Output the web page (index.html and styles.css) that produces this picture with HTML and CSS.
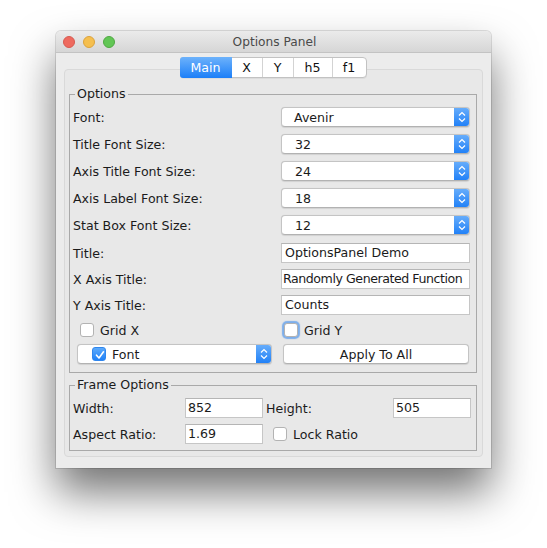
FILE: index.html
```html
<!DOCTYPE html>
<html>
<head>
<meta charset="utf-8">
<link rel="stylesheet" href="styles.css">
</head>
<body>
<div class="window">
  <div class="titlebar">
    <div class="lights">
      <span class="light red"></span>
      <span class="light yellow"></span>
      <span class="light green"></span>
    </div>
    <div class="wtitle">Options Panel</div>
    <div class="lights-spacer"></div>
  </div>
  <div class="body">
    <div class="tabs">
      <div class="seg sel w-main">Main</div>
      <div class="seg w-x">X</div>
      <div class="seg w-y">Y</div>
      <div class="seg w-h5">h5</div>
      <div class="seg w-f1 last">f1</div>
    </div>
    <div class="pane">
      <div class="group options">
        <div class="legend">Options</div>
        <div class="row r-combo first">
          <div class="label">Font:</div>
          <div class="combo"><span class="ctext wide">Avenir</span><span class="stepper"><svg width="16" height="20" viewBox="0 0 16 20"><path d="M5 8.5 L8 5.5 L11 8.5 M5 11.5 L8 14.5 L11 11.5" fill="none" stroke="#fff" stroke-width="1.2"/></svg></span></div>
        </div>
        <div class="row r-combo">
          <div class="label">Title Font Size:</div>
          <div class="combo"><span class="ctext">32</span><span class="stepper"><svg width="16" height="20" viewBox="0 0 16 20"><path d="M5 8.5 L8 5.5 L11 8.5 M5 11.5 L8 14.5 L11 11.5" fill="none" stroke="#fff" stroke-width="1.2"/></svg></span></div>
        </div>
        <div class="row r-combo">
          <div class="label">Axis Title Font Size:</div>
          <div class="combo"><span class="ctext">24</span><span class="stepper"><svg width="16" height="20" viewBox="0 0 16 20"><path d="M5 8.5 L8 5.5 L11 8.5 M5 11.5 L8 14.5 L11 11.5" fill="none" stroke="#fff" stroke-width="1.2"/></svg></span></div>
        </div>
        <div class="row r-combo">
          <div class="label">Axis Label Font Size:</div>
          <div class="combo"><span class="ctext">18</span><span class="stepper"><svg width="16" height="20" viewBox="0 0 16 20"><path d="M5 8.5 L8 5.5 L11 8.5 M5 11.5 L8 14.5 L11 11.5" fill="none" stroke="#fff" stroke-width="1.2"/></svg></span></div>
        </div>
        <div class="row r-combo">
          <div class="label">Stat Box Font Size:</div>
          <div class="combo"><span class="ctext">12</span><span class="stepper"><svg width="16" height="20" viewBox="0 0 16 20"><path d="M5 8.5 L8 5.5 L11 8.5 M5 11.5 L8 14.5 L11 11.5" fill="none" stroke="#fff" stroke-width="1.2"/></svg></span></div>
        </div>
        <div class="row r-text r-text1">
          <div class="label">Title:</div>
          <div class="field">OptionsPanel Demo</div>
        </div>
        <div class="row r-text">
          <div class="label">X Axis Title:</div>
          <div class="field tight">Randomly Generated Function</div>
        </div>
        <div class="row r-text">
          <div class="label">Y Axis Title:</div>
          <div class="field">Counts</div>
        </div>
        <div class="row r-check">
          <div class="check-item gx"><span class="box"></span><span>Grid X</span></div>
          <div class="check-item gy"><span class="box focus"></span><span>Grid Y</span></div>
        </div>
        <div class="row r-bottom">
          <div class="combo fontcombo"><span class="box checked"><svg width="14" height="14" viewBox="0 0 14 14"><path d="M3.5 7.2 L6 10 L10.5 3.8" fill="none" stroke="#fff" stroke-width="1.6" stroke-linecap="round" stroke-linejoin="round"/></svg></span><span class="ctext2">Font</span><span class="stepper"><svg width="16" height="20" viewBox="0 0 16 20"><path d="M5 8.5 L8 5.5 L11 8.5 M5 11.5 L8 14.5 L11 11.5" fill="none" stroke="#fff" stroke-width="1.2"/></svg></span></div>
          <div class="button">Apply To All</div>
        </div>
      </div>
      <div class="group frame">
        <div class="legend">Frame Options</div>
        <div class="frow first">
          <div class="label">Width:</div>
          <div class="field small">852</div>
          <div class="label hl">Height:</div>
          <div class="field small">505</div>
        </div>
        <div class="frow">
          <div class="label">Aspect Ratio:</div>
          <div class="field small">1.69</div>
          <div class="check-item lock"><span class="box"></span><span>Lock Ratio</span></div>
        </div>
      </div>
    </div>
  </div>
</div>
</body>
</html>
```

FILE: styles.css
```css
* { box-sizing: border-box; }
html, body { margin: 0; padding: 0; background: #ffffff; }
body {
  padding: 31px 0 0 56px;
  min-height: 548px;
  font-family: "DejaVu Sans", "Liberation Sans", sans-serif;
  font-size: 12.6px;
  color: #1b1b1b;
}
.window {
  width: 435px;
  height: 437px;
  background: #ececec;
  border-radius: 5px 5px 0 0;
  box-shadow: 0 24px 44px rgba(0,0,0,0.55), 0 0 0 1px rgba(0,0,0,0.12);
  display: flex;
  flex-direction: column;
}
.titlebar {
  height: 22px;
  border-radius: 5px 5px 0 0;
  background: linear-gradient(#ebebeb, #d6d6d6);
  border-bottom: 1px solid #c3c3c3;
  display: flex;
  align-items: center;
  padding: 0 7px;
}
.lights { display: flex; gap: 8px; width: 60px; }
.lights-spacer { width: 60px; }
.light {
  width: 12px; height: 12px; border-radius: 50%;
  display: block;
}
.red { background: #ee6a5f; border: 1px solid #d75a50; }
.yellow { background: #f5bf4f; border: 1px solid #dca33c; }
.green { background: #62c655; border: 1px solid #50a843; }
.wtitle {
  flex: 1;
  text-align: center;
  font-family: "DejaVu Sans", sans-serif;
  font-size: 12.2px;
  color: #4a4a4a;
  padding-left: 2px;
}
.body {
  flex: 1;
  padding: 4px 8px 11px 8px;
  display: flex;
  flex-direction: column;
}
.tabs {
  align-self: center;
  display: flex;
  height: 21px;
  margin-left: -1px;
  margin-bottom: -9px;
  position: relative;
  z-index: 2;
  border: 1px solid #c2c2c2;
  border-radius: 4px;
  background: #fff;
  box-shadow: 0 1px 0 rgba(0,0,0,0.05);
  font-size: 12.6px;
}
.seg {
  display: flex;
  align-items: center;
  justify-content: center;
  border-right: 1px solid #d3d3d3;
  color: #111;
}
.seg.last { border-right: none; }
.seg.sel {
  background: linear-gradient(#6db2fb, #1c7ff8);
  color: #fff;
  border-radius: 3px 0 0 3px;
  border-right: none;
  margin: -1px 0 -1px -1px;
}
.w-main { width: 52px; }
.w-x { width: 31px; }
.w-y { width: 31px; }
.w-h5 { width: 39px; }
.w-f1 { width: 33px; }
.pane {
  flex: 1;
  background: #e8e8e8;
  border: 1px solid #d9d9d9;
  border-radius: 4px;
  padding: 24px 5px 0 4px;
}
.group {
  border: 1px solid #a9a9a9;
  padding: 0 7px 0 3px;
}
.frame { margin-top: 12px; height: 66px; }
.options { height: 279px; }
.legend {
  margin: -9px 0 0 2px;
  padding: 0 2px 0 2px;
  width: fit-content;
  height: 16px;
  line-height: 16px;
  background: #e8e8e8;
}
.row {
  display: grid;
  grid-template-columns: 208px 189px;
  align-items: center;
  height: 20px;
}
.r-combo { margin-top: 7px; }
.r-combo.first { margin-top: 5px; }
.r-text { margin-top: 6px; }
.r-text1 { margin-top: 8px; }
.r-check { margin-top: 5px; grid-template-columns: 210px 190px; }
.r-bottom { margin-top: 4px; grid-template-columns: 195px 186px; column-gap: 11px; margin-left: 4px; }
.label { white-space: nowrap; }
.combo {
  height: 20px;
  background: #fff;
  border: 1px solid #c4c4c4;
  border-bottom-color: #b2b2b2;
  border-radius: 4px;
  display: flex;
  align-items: center;
  justify-content: space-between;
  box-shadow: 0 0.5px 1px rgba(0,0,0,0.1);
  overflow: hidden;
}
.ctext { padding-left: 13px; }
.ctext.wide { padding-left: 12px; }
.stepper {
  width: 16px;
  height: 20px;
  margin: -1px -1px -1px 0;
  background: linear-gradient(#6aaffb, #1e7ff7);
  border-radius: 0 4px 4px 0;
  display: flex;
}
.field {
  height: 20px;
  background: #fff;
  border: 1px solid #c6c6c6;
  border-top-color: #b5b5b5;
  padding-left: 3px;
  line-height: 18px;
  white-space: nowrap;
  overflow: hidden;
}
.field.tight { padding-left: 1px; letter-spacing: -0.45px; }
.check-item { display: flex; align-items: center; gap: 6px; }
.gx { padding-left: 7px; }
.gy { padding-left: 1px; }
.box {
  width: 14px; height: 14px;
  border: 1px solid #b3b3b3;
  border-radius: 3px;
  background: #fff;
  display: block;
  flex: none;
}
.box.focus { box-shadow: 0 0 1px 2px rgba(90,155,235,0.75); }
.box.checked {
  background: linear-gradient(#5daafb, #1f81f8);
  border-color: #2f86ee;
  margin-left: 14px;
}
.ctext2 { flex: 1; padding-left: 6px; }
.fontcombo { justify-content: flex-start; }
.button {
  height: 20px;
  background: #fff;
  border: 1px solid #c4c4c4;
  border-bottom-color: #b2b2b2;
  border-radius: 4px;
  display: flex;
  align-items: center;
  justify-content: center;
  box-shadow: 0 0.5px 1px rgba(0,0,0,0.1);
}
.frow {
  display: grid;
  grid-template-columns: 112px 81px 127px 78px;
  align-items: center;
  height: 20px;
  margin-top: 6px;
}
.frow.first { margin-top: 5px; }
.field.small { padding-left: 2px; width: 78px; }
.lock { padding-left: 7px; grid-column: span 2; }
```
